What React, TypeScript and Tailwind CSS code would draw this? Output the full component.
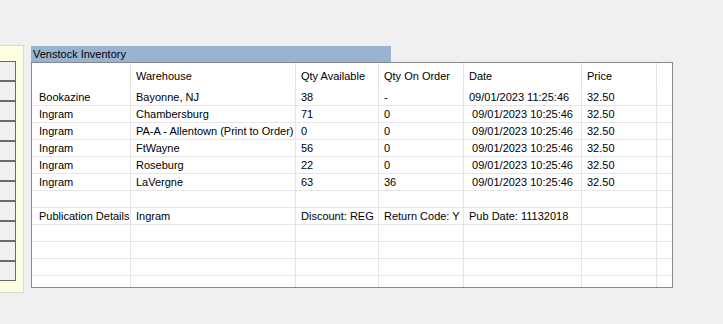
import React from "react";

type Row = {
  source: string;
  warehouse: string;
  available: string;
  onOrder: string;
  date: string;
  price: string;
};

const rows: Row[] = [
  { source: "Bookazine", warehouse: "Bayonne, NJ", available: "38", onOrder: "-", date: "09/01/2023 11:25:46", price: "32.50" },
  { source: "Ingram", warehouse: "Chambersburg", available: "71", onOrder: "0", date: "\u00a009/01/2023 10:25:46", price: "32.50" },
  { source: "Ingram", warehouse: "PA-A - Allentown (Print to Order)", available: "0", onOrder: "0", date: "\u00a009/01/2023 10:25:46", price: "32.50" },
  { source: "Ingram", warehouse: "FtWayne", available: "56", onOrder: "0", date: "\u00a009/01/2023 10:25:46", price: "32.50" },
  { source: "Ingram", warehouse: "Roseburg", available: "22", onOrder: "0", date: "\u00a009/01/2023 10:25:46", price: "32.50" },
  { source: "Ingram", warehouse: "LaVergne", available: "63", onOrder: "36", date: "\u00a009/01/2023 10:25:46", price: "32.50" },
  { source: "", warehouse: "", available: "", onOrder: "", date: "", price: "" },
  { source: "Publication Details", warehouse: "Ingram", available: "Discount: REG", onOrder: "Return Code: Y", date: "Pub Date: 11132018", price: "" },
  { source: "", warehouse: "", available: "", onOrder: "", date: "", price: "" },
  { source: "", warehouse: "", available: "", onOrder: "", date: "", price: "" },
  { source: "", warehouse: "", available: "", onOrder: "", date: "", price: "" },
  { source: "", warehouse: "", available: "", onOrder: "", date: "", price: "" },
];

// column widths incl. the 1px divider on the right
const cols = ["w-[99px] pl-[7px]", "w-[165px] pl-[5px]", "w-[83px] pl-[5px]", "w-[85px] pl-[5px]", "w-[118px] pl-[5px]", "w-[75px] pl-[5px]"];

export default function App() {
  return (
    <div
      className="w-[723px] h-[324px] bg-[#f0f0f0] flex items-start text-[11px] text-black overflow-hidden"
      style={{ fontFamily: '"Liberation Sans", Arial, sans-serif' }}
    >
      {/* Side list panel */}
      <div className="mt-[45px] w-[24px] h-[248px] bg-[#ffffe1] border-t border-r border-b border-[#d9d9d0] pt-[15px]">
        {Array.from({ length: 11 }).map((_, i) => (
          <div key={i} className="w-[16px] h-[20px] bg-[#f0f0f0] border border-l-0 border-[#6a6a6a]" />
        ))}
      </div>

      {/* Inventory grid */}
      <div className="ml-[7px] mt-[46px] flex flex-col">
        <div className="w-[360px] h-[16px] bg-[#99b4d1] pl-[2px] leading-[16px] whitespace-nowrap">
          Venstock Inventory
        </div>
        <div className="w-[642px] h-[226px] border border-[#828790] bg-white overflow-hidden">
          <div className="flex h-[26px]">
            {["", "Warehouse", "Qty Available", "Qty On Order", "Date", "Price"].map((h, i) => (
              <div key={i} className={`${cols[i]} shrink-0 flex items-center border-r border-[#e3e3e3] whitespace-nowrap`}>
                {h}
              </div>
            ))}
            <div className="flex-1" />
          </div>
          {rows.map((r, idx) => (
            <div key={idx} className="flex h-[17px] border-b border-[#e6e6e6]">
              {[r.source, r.warehouse, r.available, r.onOrder, r.date, r.price].map((v, i) => (
                <div
                  key={i}
                  className={`${cols[i]} shrink-0 flex items-center border-r border-[#e6e6e6] whitespace-nowrap overflow-hidden`}
                >
                  {v}
                </div>
              ))}
              <div className="flex-1" />
            </div>
          ))}
        </div>
      </div>
    </div>
  );
}
